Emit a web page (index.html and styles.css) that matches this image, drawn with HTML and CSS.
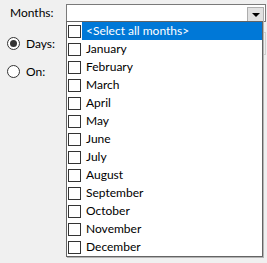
FILE: index.html
```html
<!DOCTYPE html>
<html>
<head>
<meta charset="utf-8">
<link rel="stylesheet" href="styles.css">
</head>
<body>
<div class="form">
  <div class="row-months">
    <span class="label">Months:</span>
    <div class="combo">
      <div class="combo-btn"><span class="arrow"></span></div>
      <ul class="dropdown">
        <li class="item selected"><span class="check"></span><span class="text">&lt;Select all months&gt;</span></li>
        <li class="item"><span class="check"></span><span class="text">January</span></li>
        <li class="item"><span class="check"></span><span class="text">February</span></li>
        <li class="item"><span class="check"></span><span class="text">March</span></li>
        <li class="item"><span class="check"></span><span class="text">April</span></li>
        <li class="item"><span class="check"></span><span class="text">May</span></li>
        <li class="item"><span class="check"></span><span class="text">June</span></li>
        <li class="item"><span class="check"></span><span class="text">July</span></li>
        <li class="item"><span class="check"></span><span class="text">August</span></li>
        <li class="item"><span class="check"></span><span class="text">September</span></li>
        <li class="item"><span class="check"></span><span class="text">October</span></li>
        <li class="item"><span class="check"></span><span class="text">November</span></li>
        <li class="item"><span class="check"></span><span class="text">December</span></li>
      </ul>
    </div>
  </div>
  <div class="radio-row days">
    <span class="radio checked"></span>
    <span class="radio-label">Days:</span>
    <span class="field"></span>
  </div>
  <div class="radio-row on">
    <span class="radio"></span>
    <span class="radio-label">On:</span>
  </div>
</div>
</body>
</html>
```
FILE: styles.css
```css
html, body {
  margin: 0;
  padding: 0;
  background: #f0f0f0;
}
body {
  width: 267px;
  height: 263px;
  overflow: hidden;
  font-family: Lato, "Liberation Sans", sans-serif;
  font-size: 12px;
  color: #000;
}
.form {
  padding-top: 4px;
}
.row-months {
  display: flex;
  align-items: center;
  height: 18px;
}
.label {
  width: 56px;
  padding-left: 10px;
  line-height: 18px;
}
.combo {
  position: relative;
  width: 200px;
  height: 18px;
  box-sizing: border-box;
  border: 1px solid #7a7a7a;
  background: #fff;
}
.combo-btn {
  position: absolute;
  right: 1px;
  top: 2px;
  width: 17px;
  height: 15px;
  box-sizing: border-box;
  border: 1px solid #adadad;
  background: #e1e1e1;
  display: flex;
  align-items: center;
  justify-content: center;
}
.arrow {
  width: 0;
  height: 0;
  border-left: 4px solid transparent;
  border-right: 4px solid transparent;
  border-top: 4px solid #000;
}
.dropdown {
  position: absolute;
  left: -1px;
  top: 16px;
  z-index: 5;
  width: 197px;
  margin: 0;
  padding: 0;
  list-style: none;
  box-sizing: border-box;
  border: 1px solid #646464;
  box-shadow: 1px 1px 0 #b4b4b4;
  background: #fff;
}
.item {
  display: flex;
  align-items: center;
  height: 18px;
}
.check {
  width: 13px;
  height: 13px;
  box-sizing: border-box;
  border: 1px solid #333;
  background: #fff;
  margin-left: 1px;
  flex: none;
}
.text {
  margin-left: 1px;
  padding-left: 4px;
  line-height: 18px;
  flex: 1;
}
.selected .text {
  background: #0078d7;
  color: #fff;
}
.radio-row {
  display: flex;
  align-items: center;
  padding-left: 7px;
}
.days {
  margin-top: 10px;
  height: 23px;
}
.on {
  margin-top: 10px;
  height: 13px;
}
.radio {
  width: 13px;
  height: 13px;
  box-sizing: border-box;
  border: 1px solid #333;
  border-radius: 50%;
  background: #fff;
  display: flex;
  align-items: center;
  justify-content: center;
  flex: none;
}
.radio.checked::after {
  content: "";
  width: 7px;
  height: 7px;
  border-radius: 50%;
  background: #333;
}
.radio-label {
  margin-left: 6px;
}
.field {
  margin-left: auto;
  margin-right: 1px;
  width: 120px;
  height: 23px;
  box-sizing: border-box;
  border: 1px solid #cfcfcf;
}
```
